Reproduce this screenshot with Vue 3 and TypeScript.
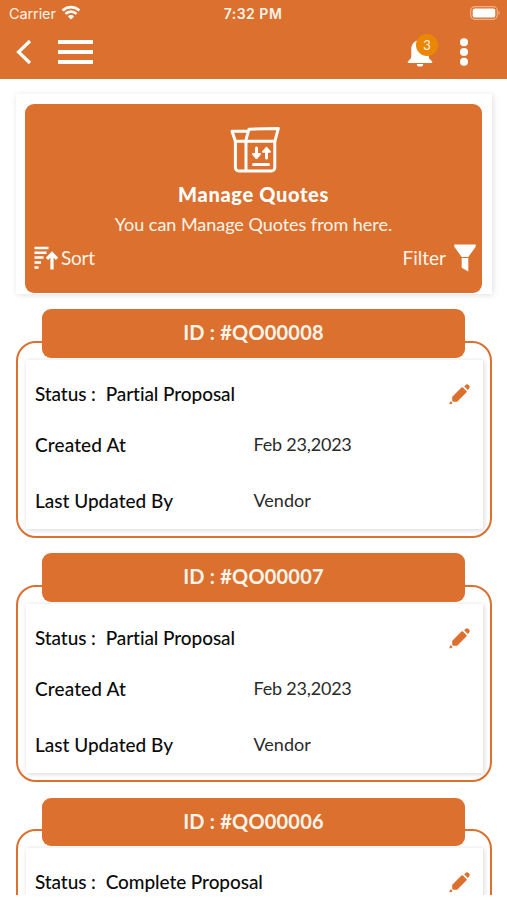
<script setup lang="ts">
interface Quote {
  id: string
  status: string
  createdAt?: string
  updatedBy?: string
}

const quotes: Quote[] = [
  { id: '#QO00008', status: 'Partial Proposal', createdAt: 'Feb 23,2023', updatedBy: 'Vendor' },
  { id: '#QO00007', status: 'Partial Proposal', createdAt: 'Feb 23,2023', updatedBy: 'Vendor' },
  { id: '#QO00006', status: 'Complete Proposal' },
]
</script>

<template>
  <div class="screen">
    <header class="header">
      <div class="statusbar">
        <div class="carrier">
          <span>Carrier</span>
          <svg width="20" height="15" viewBox="0 0 20 15" fill="none" stroke="#fff" stroke-width="2.7">
            <path d="M1.6 5.5a12 12 0 0 1 16.8 0" />
            <path d="M4.5 8.9a7.8 7.8 0 0 1 11 0" />
            <path d="M10 14.400 6.900 11.400a4.400 4.400 0 0 1 6.200 0z" fill="#fff" stroke="none" />
          </svg>
        </div>
        <span class="clock">7:32 PM</span>
        <svg class="battery" width="31" height="14" viewBox="0 0 31 14">
          <rect x="0.7" y="0.7" width="26.6" height="12.6" rx="4" fill="none" stroke="#fff" stroke-opacity=".45" stroke-width="1.2" />
          <rect x="2.7" y="2.4" width="22.6" height="9.2" rx="2.2" fill="#fff" />
          <path d="M28.6 4.8q2 2.2 0 4.4z" fill="#fff" fill-opacity=".55" />
        </svg>
      </div>
      <nav class="toolbar">
        <svg class="back" width="16" height="26" viewBox="0 0 16 26" fill="none" stroke="#fff" stroke-width="3.2">
          <path d="M14 2 2.5 13 14 24" />
        </svg>
        <div class="burger"><i /><i /><i /></div>
        <div class="bell">
          <svg width="26" height="29" viewBox="0 0 26 29" fill="#fff">
            <path d="M13 0c1 0 1.800.8 1.800 1.800v.5c4.200.8 6.900 4.300 6.900 8.600v7.200c0 2 1 3.600 3.500 5.400v1.500H.8v-1.500c2.500-1.800 3.500-3.400 3.500-5.400v-7.200c0-4.300 2.700-7.800 6.900-8.600v-.5C11.200.8 12 0 13 0z" />
            <path d="M9.800 26h6.400a3.200 2.600 0 0 1-6.400 0z" />
          </svg>
          <span class="badge">3</span>
        </div>
        <svg class="more" width="10" height="28" viewBox="0 0 10 28" fill="#fff">
          <circle cx="5" cy="4.200" r="4" /><circle cx="5" cy="14" r="4" /><circle cx="5" cy="23.800" r="4" />
        </svg>
      </nav>
    </header>

    <main>
      <section class="hero-frame">
        <div class="hero">
          <svg class="box" width="52" height="48" viewBox="0 0 52 48" fill="none" stroke="#fff" stroke-width="3" stroke-linejoin="round" stroke-linecap="round">
            <path d="M18.500 5.300H4L7.400 15.300H17.500L21 3.200 50.300 2.600 46.800 15.300H17.500" />
            <path d="M7.400 15.300V41.500a3.500 3.500 0 0 0 3.500 3.500H43.300a3.500 3.500 0 0 0 3.500-3.500V15.300M18 15.300V45" />
            <path d="M25.500 38.500H40.500M28.500 22V31M38.500 32V23" />
            <path d="M25 28h7L28.500 32zM35 25.800h7L38.500 21.800z" fill="#fff" stroke-width="2" />
          </svg>
          <h1>Manage Quotes</h1>
          <p>You can Manage Quotes from here.</p>
          <div class="actions">
            <div class="action">
              <svg width="24" height="24" viewBox="0 0 24 24" fill="none" stroke="#fff">
                <path d="M.5 2H14.500M.5 6.800H12.500M.5 11.600H9.500M.5 16.400H7M.5 21.500H4.500" stroke-width="2.500" />
                <path d="M18 23.500V8M13 12.800 18 7.500l5 5.300" stroke-width="3.200" />
              </svg>
              <span class="sort">Sort</span>
            </div>
            <div class="action">
              <span class="filter">Filter</span>
              <svg width="22" height="28" viewBox="0 0 22 28" fill="#fff">
                <path d="M.3.500h21.400v2.300L14.300 13H7.700L.3 2.800zM7.700 14h6.600v13.500l-6.600-3.800z" />
              </svg>
            </div>
          </div>
        </div>
      </section>

      <article v-for="quote in quotes" :key="quote.id" class="quote">
        <h2>ID : {{ quote.id }}</h2>
        <div class="outline">
          <div class="details">
            <div class="row status">
              <span class="status-label">Status :</span>
              <span class="status-value">{{ quote.status }}</span>
              <svg width="22" height="22" viewBox="0 0 22 22" fill="#db702f">
                <path d="M13.200 5.300 16.600 8.700 7.700 17.600 4.300 17.600V14.200z" stroke="#db702f" stroke-width="2.200" stroke-linejoin="round" />
                <path d="m15.200 3.300 1.300-1.300q1.500-1.500 3 0l.6.6q1.500 1.500 0 3l-1.300 1.300z" />
                <path d="M1.300 18.300q2.200.2 2.200 2.200L.2 21.600z" />
              </svg>
            </div>
            <div v-if="quote.createdAt" class="row created">
              <span class="created-label">Created At</span><span class="value date">{{ quote.createdAt }}</span>
            </div>
            <div v-if="quote.updatedBy" class="row updated">
              <span class="updated-label">Last Updated By</span><span class="value vendor">{{ quote.updatedBy }}</span>
            </div>
          </div>
        </div>
      </article>
    </main>
  </div>
</template>

<style>
body { background: #fff; }
</style>

<style scoped>
* { box-sizing: border-box; }
.screen {
  width: 507px;
  height: 895px;
  overflow: hidden;
  background: #fff;
  color: #0c0c0c;
  font-family: Lato, "Liberation Sans", sans-serif;
  font-variant-ligatures: none;
}
svg { display: block; flex: none; }
.header { height: 79px; background: #db702f; color: #fff; }
.statusbar {
  height: 27px;
  display: grid;
  grid-template-columns: 1fr auto 1fr;
  align-items: center;
  padding: 0 6px 0 9px;
  font: 14.5px/18px Inter, sans-serif;
  color: #fff4e9;
}
.carrier { display: flex; align-items: center; gap: 6px; letter-spacing: -0.1px; }
.carrier svg { margin: -2px 0 0 -1px; }
.clock { margin-left: -4px; font-weight: 600; font-size: 14px; letter-spacing: .5px; }
.battery { justify-self: end; margin-top: -1px; }
.toolbar { display: flex; align-items: center; height: 50px; padding: 0 38px 0 16px; }
.burger { margin-left: 26px; width: 35px; display: flex; flex-direction: column; gap: 6px; }
.burger i { height: 4px; background: #fff; }
.bell { position: relative; margin-left: auto; }
.badge {
  position: absolute;
  left: 9px;
  top: -4px;
  width: 22px;
  height: 22px;
  border-radius: 50%;
  background: #ec8706;
  color: #fff4e9;
  font-size: 13px;
  line-height: 22px;
  text-align: center;
}
.more { margin-left: 26px; }
main { padding: 15px 15px 0 16px; }
.hero-frame {
  height: 200px;
  padding: 10px 10px 0 9px;
  box-shadow: 1px 1px 6px rgba(0, 0, 0, .13);
}
.hero {
  height: 189px;
  padding-top: 22px;
  border-radius: 9px;
  background: #db702f;
  color: #fff4e9;
  text-align: center;
}
.box { margin: 0 auto; }
h1, h2, p { margin: 0; }
h1 { margin-top: 8px; font-size: 20px; line-height: 24px; font-weight: 900; letter-spacing: .65px; color: #fff; }
p { margin-top: 6px; font-size: 18px; line-height: 24px; letter-spacing: -.03px; }
.actions { display: flex; justify-content: space-between; padding: 8px 6px 0 9px; font-size: 19px; }
.action { display: flex; align-items: center; height: 28px; gap: 3px; }
.action span { margin-top: -2px; }
.sort { letter-spacing: -.2px; }
.filter { margin-right: 5px; }
.quote { margin: 15px 0 0; }
.quote + .quote { margin-top: 15.300px; }
h2 {
  position: relative;
  z-index: 1;
  margin: 0 27px 0 26px;
  height: 48.500px;
  border-radius: 9px;
  background: #db702f;
  color: #fff4e9;
  font-size: 20px;
  line-height: 46.500px;
  font-weight: 700;
  letter-spacing: .2px;
  text-align: center;
}
.outline {
  height: 197.500px;
  margin-top: -17px;
  padding: 17px 7px 0 8px;
  border: 2px solid #db702f;
  border-radius: 20px;
}
.details { height: 169px; padding: 19px 12px 0 9px; box-shadow: 1px 1px 5px rgba(20, 20, 50, .17); }
.row { display: flex; align-items: center; height: 30px; font-size: 19px; white-space: nowrap; font-weight: 500; }
.row span { margin-top: -1px; }
.status-label { letter-spacing: -.1px; }
.status-value { margin-left: 10px; letter-spacing: -.08px; }
.row svg { margin-left: auto; }
.created { margin-top: 21px; }
.updated { margin-top: 26px; }
.row > span:first-child { flex: none; }
.created > span:first-child, .updated > span:first-child { width: 218.500px; }
.created-label { letter-spacing: .13px; }
.value { font-size: 18px; font-weight: 400; color: #2a2a2a; }
.date { letter-spacing: -.2px; }
</style>
